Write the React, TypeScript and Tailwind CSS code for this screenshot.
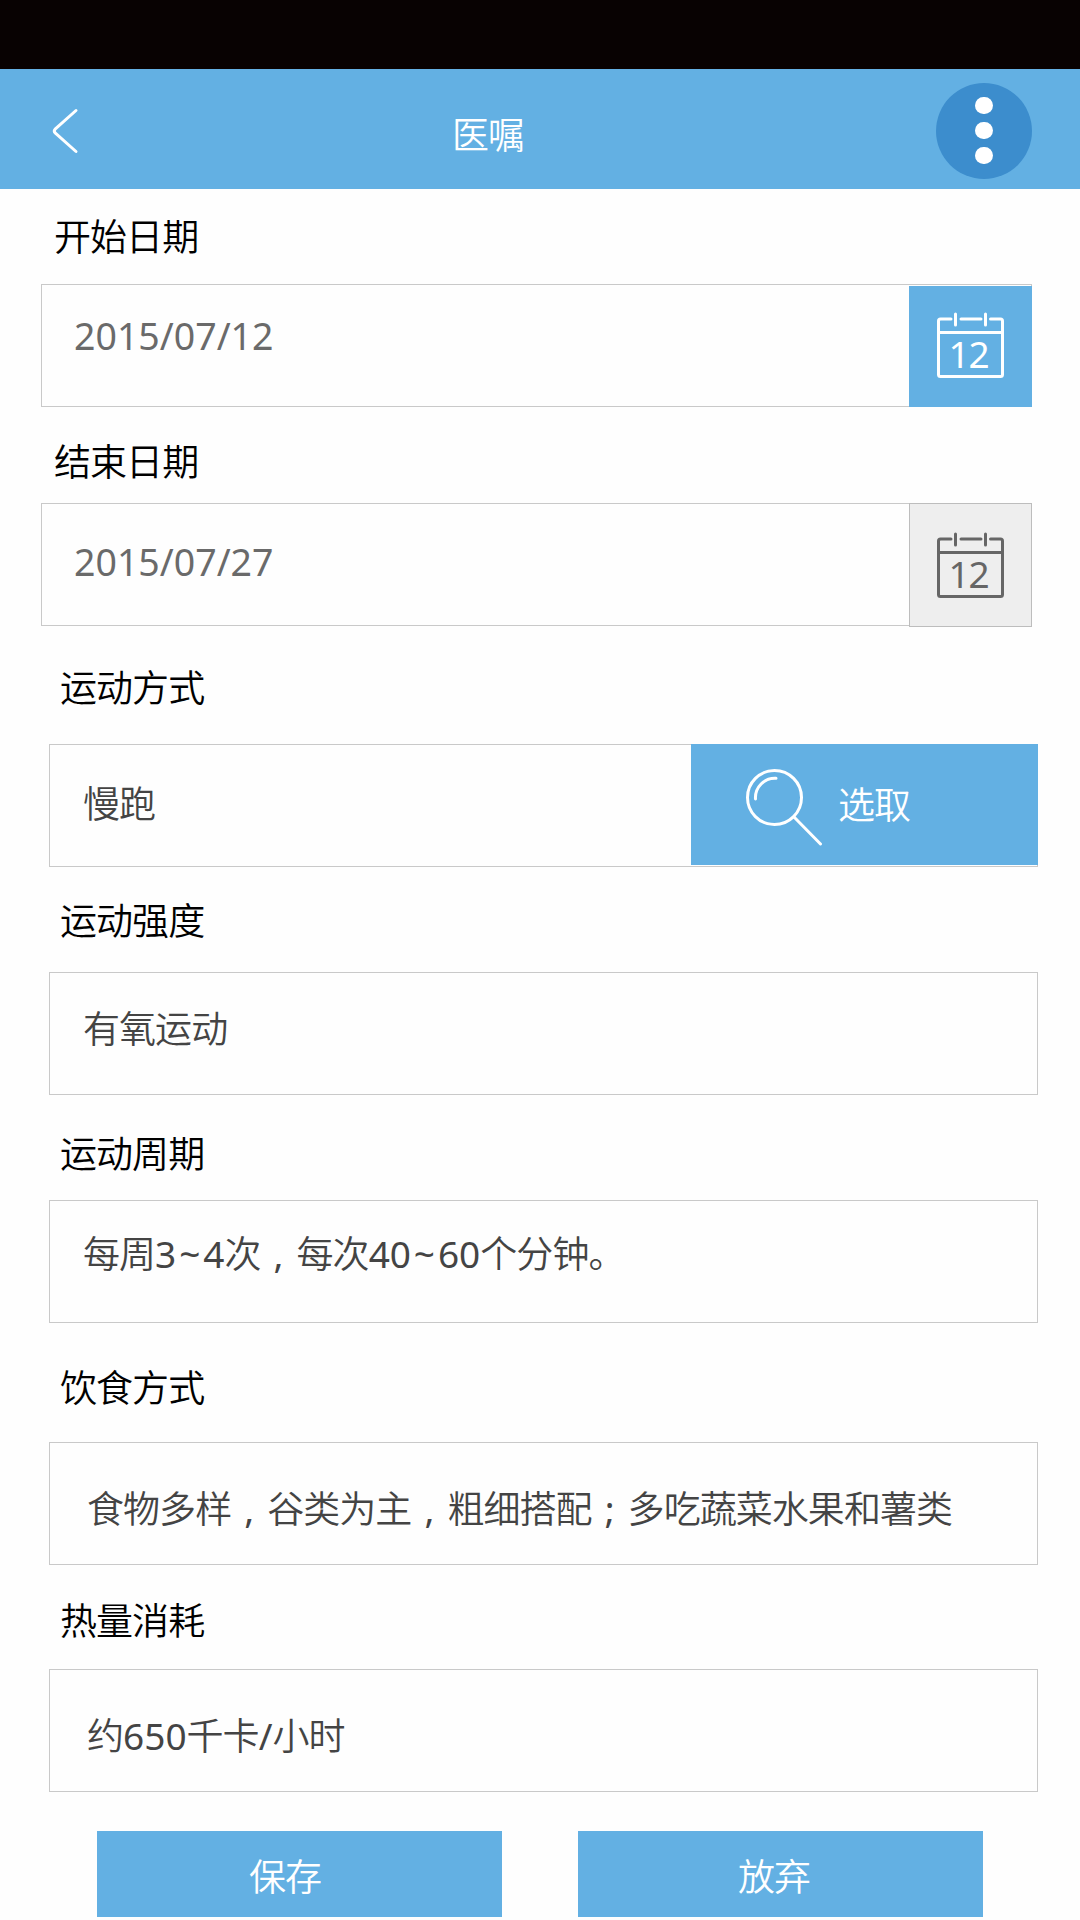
import { Fragment } from 'react'
import type { ReactNode } from 'react'
import clsx from 'clsx'

function BackIcon() {
  return (
    <svg width="28" height="48" viewBox="0 0 28 48" fill="none" stroke="#fff" strokeWidth="3" strokeLinecap="round" strokeLinejoin="round">
      <path d="M25 3.5 L4.4 21.8 Q2.2 24 4.4 26.2 L25 44.5" />
    </svg>
  )
}

function CalendarIcon() {
  return (
    <svg width="69" height="66" viewBox="0 0 69 66" fill="none" stroke="currentColor" strokeWidth="3" strokeLinecap="round" strokeLinejoin="round">
      <path d="M15 7 H4.5 Q2.5 7 2.5 9 V62.5 Q2.5 64.5 4.5 64.5 H64.5 Q66.5 64.5 66.5 62.5 V9 Q66.5 7 64.5 7 H54.5" />
      <path d="M25 7 H45" />
      <path d="M3 20.5 H66" />
      <path d="M19.5 2 V13 M49.5 2 V13" />
      <text x="12.5 32.5" y="56" fontSize="37" fontWeight="400" fill="currentColor" stroke="none">12</text>
    </svg>
  )
}

function SearchIcon() {
  return (
    <svg width="78" height="78" viewBox="0 0 78 78" fill="none" stroke="#fff" strokeWidth="3" strokeLinecap="round">
      <circle cx="29.5" cy="29.5" r="27" />
      <path d="M10.5 31 A19.5 19.5 0 0 1 31 10.3" />
      <path d="M49 49 L75.5 76" />
    </svg>
  )
}

const cellClass: Record<string, string> = {
  ',': 'inline-block w-9 text-center',
  ';': 'inline-block w-9 text-center',
  '~': 'inline-block w-[27px] text-center',
}

function Value({ text }: { text: string }) {
  return (
    <>
      {text.split(/([,;~]|[\d/]+)/).map((part, i) =>
        /^[,;~\d/]/.test(part) ? (
          <span key={i} className={clsx('font-normal tracking-normal', cellClass[part])}>{part}</span>
        ) : (
          <Fragment key={i}>{part}</Fragment>
        )
      )}
    </>
  )
}

interface FieldProps {
  label: string
  value: string
  wide?: boolean
  labelClass: string
  valueClass: string
  children?: ReactNode
}

function Field({ label, value, wide, labelClass, valueClass, children }: FieldProps) {
  return (
    <div className={wide ? 'ml-[49px] w-[989px]' : 'ml-[41px] w-[991px]'}>
      <div className={clsx('text-black', labelClass)}>{label}</div>
      <div className="flex h-[123px] items-start border border-[#c9c9c9]">
        <div className={clsx('flex-1 whitespace-nowrap', valueClass)}>
          <Value text={value} />
        </div>
        {children}
      </div>
    </div>
  )
}

export default function App() {
  return (
    <main className="h-[1920px] w-[1080px] overflow-hidden bg-[#fefefe] font-['Noto_Sans','Noto_Sans_CJK_SC',sans-serif] text-[37px] font-[350] leading-9 tracking-[-0.95px]">
      <div className="h-[69px] bg-[#080202]" />
      <header className="flex h-[120px] items-center bg-[#63b0e3] pl-[51px] pr-12 text-white">
        <button className="mt-1"><BackIcon /></button>
        <h1 className="ml-[373px] mt-3 flex-1">医嘱</h1>
        <button className="mt-1 flex size-24 flex-col items-center justify-center gap-2 rounded-full bg-[#3c8dcd] pb-0.5">
          <span className="h-[17px] w-[18px] rounded-full bg-white" />
          <span className="h-[17px] w-[18px] rounded-full bg-white" />
          <span className="h-[17px] w-[18px] rounded-full bg-white" />
        </button>
      </header>

      <Field label="开始日期" value="2015/07/12" labelClass="pl-[13px] pt-[30px] pb-[29px]" valueClass="pl-[32px] pt-[33px] text-[37.5px] text-[#6a6a6a]">
        <button className="-mr-px mt-px flex h-[121px] w-[123px] items-center justify-center bg-[#63b0e3] pb-[3px] text-white">
          <CalendarIcon />
        </button>
      </Field>
      <Field label="结束日期" value="2015/07/27" labelClass="pl-[13px] pt-[37px] pb-[23px]" valueClass="pl-[32px] pt-[40px] text-[37.5px] text-[#6a6a6a]">
        <button className="-mr-px -mt-px flex h-[124px] w-[123px] items-center justify-center border border-[#bdbdbd] bg-[#eee] text-[#666]">
          <CalendarIcon />
        </button>
      </Field>
      <Field wide label="运动方式" value="慢跑" labelClass="pl-[11px] pt-[44px] pb-[38px]" valueClass="pl-[33px] pt-[41px] text-[#444]">
        <button className="-mr-px -mt-px flex h-[121px] w-[347px] items-center bg-[#63b0e3] pl-[54px] text-white">
          <span className="mt-1"><SearchIcon /></span>
          <span className="ml-[15px]">选取</span>
        </button>
      </Field>
      <Field wide label="运动强度" value="有氧运动" labelClass="pl-[11px] pt-[36px] pb-[33px]" valueClass="pl-[33px] pt-[38px] text-[#444]" />
      <Field wide label="运动周期" value="每周3~4次,每次40~60个分钟。" labelClass="pl-[11px] pt-[41px] pb-[28px]" valueClass="pl-[33px] pt-[35px] text-[#444]" />
      <Field wide label="饮食方式" value="食物多样,谷类为主,粗细搭配;多吃蔬菜水果和薯类" labelClass="pl-[11px] pt-[47px] pb-[36px]" valueClass="pl-[37px] pt-[48px] text-[#444]" />
      <Field wide label="热量消耗" value="约650千卡/小时" labelClass="pl-[11px] pt-[38px] pb-[30px]" valueClass="pl-[37px] pt-[48px] text-[#444]" />

      <div className="mt-[39px] flex gap-[76px] pl-[97px] text-white">
        <button className="h-[86px] w-[405px] bg-[#63b0e3] pl-[152px] pt-1.5 text-left">保存</button>
        <button className="h-[86px] w-[405px] bg-[#63b0e3] pl-[160px] pt-1.5 text-left">放弃</button>
      </div>
    </main>
  )
}
